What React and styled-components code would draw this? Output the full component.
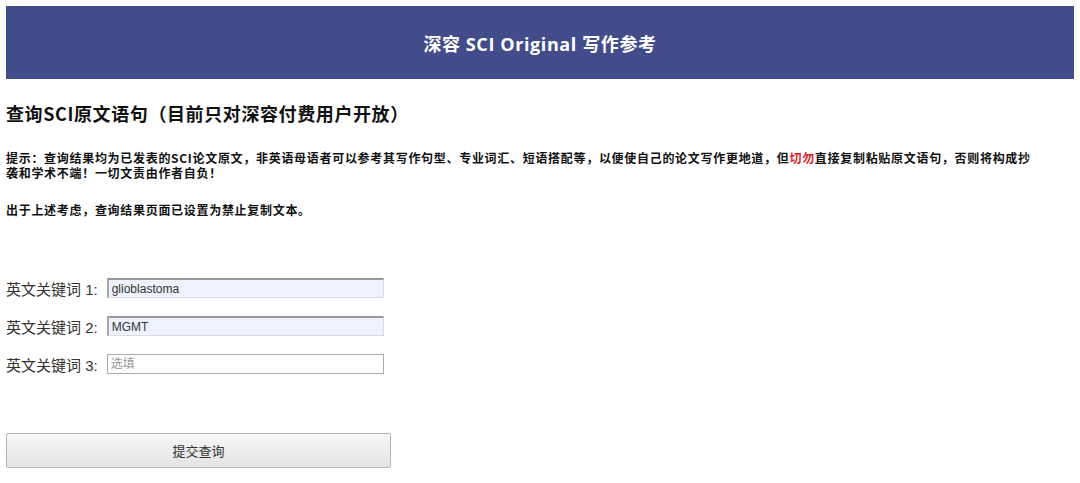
import React from "react"
import styled, { createGlobalStyle } from "styled-components"

const Global = createGlobalStyle`
  html, body {
    margin: 0;
    background: #fff;
  }
  body {
    padding: 6px;
    font-family: "Liberation Sans", "Noto Sans CJK SC", sans-serif;
    color: #222;
  }
`

const Header = styled.header`
  height: 73px;
  background: #434c8b;
  display: flex;
  align-items: center;
  justify-content: center;

  h1 {
    margin: 0;
    color: #fff;
    font-family: "Open Sans", "Noto Sans CJK SC", sans-serif;
    font-size: 18px;
    font-weight: 700;
    letter-spacing: 0.6px;
  }
`

const Title = styled.h2`
  margin: 21px 0 0 0;
  font-family: "Noto Sans CJK SC", sans-serif;
  font-size: 18px;
  font-weight: 700;
  line-height: 26px;
  letter-spacing: 0.6px;
  color: #111;
`

const Note = styled.p`
  margin: ${p => p.$top}px 0 0 0;
  font-family: "Noto Sans CJK SC", sans-serif;
  font-size: 12px;
  font-weight: 700;
  line-height: 15px;
  letter-spacing: 0.7px;
  color: #111;

  em {
    font-style: normal;
    color: #d9262b;
  }
`

const Form = styled.form`
  margin-top: 61px;
  display: flex;
  flex-direction: column;
  gap: 18px;
`

const Row = styled.label`
  display: flex;
  align-items: center;
  gap: 9px;
  font-size: 15px;
  color: #333;
  height: 20px;
`

const Input = styled.input`
  box-sizing: border-box;
  width: 277px;
  height: 20px;
  margin: 0;
  padding: 0 3px;
  font-family: "Liberation Sans", "Noto Sans CJK SC", sans-serif;
  font-size: 12px;
  color: #333;
  border: 1px solid ${p => (p.$filled ? "#d6dbe6" : "#aaa")};
  border-top: ${p => (p.$filled ? "2px solid #999" : "1px solid #aaa")};
  border-left: ${p => (p.$filled ? "2px solid #a8a8a8" : "1px solid #aaa")};
  background: ${p => (p.$filled ? "#eef2fc" : "#fff")};
  outline: none;

  &::placeholder {
    color: #999;
  }
`

const Submit = styled.button`
  display: block;
  margin-top: 59px;
  width: 385px;
  height: 35px;
  border: 1px solid #b5b5b5;
  border-radius: 2px;
  background: linear-gradient(#f6f6f6, #e4e4e4);
  font-family: "Noto Sans CJK SC", sans-serif;
  font-size: 13px;
  color: #333;
`

const keywords = [
  { n: 1, value: "glioblastoma" },
  { n: 2, value: "MGMT" },
  { n: 3, value: "" },
]

export default function App() {
  return (
    <>
      <Global />
      <Header>
        <h1>深容 SCI Original 写作参考</h1>
      </Header>
      <Title>查询SCI原文语句（目前只对深容付费用户开放）</Title>
      <Note $top={24}>
        提示：查询结果均为已发表的SCI论文原文，非英语母语者可以参考其写作句型、专业词汇、短语搭配等，以便使自己的论文写作更地道，但<em>切勿</em>直接复制粘贴原文语句，否则将构成抄<br />
        袭和学术不端！一切文责由作者自负！
      </Note>
      <Note $top={22}>出于上述考虑，查询结果页面已设置为禁止复制文本。</Note>
      <Form onSubmit={e => e.preventDefault()}>
        {keywords.map(k => (
          <Row key={k.n}>
            英文关键词 {k.n}:
            <Input
              $filled={!!k.value}
              defaultValue={k.value}
              placeholder={k.value ? "" : "选填"}
            />
          </Row>
        ))}
      </Form>
      <Submit type="button">提交查询</Submit>
    </>
  )
}
